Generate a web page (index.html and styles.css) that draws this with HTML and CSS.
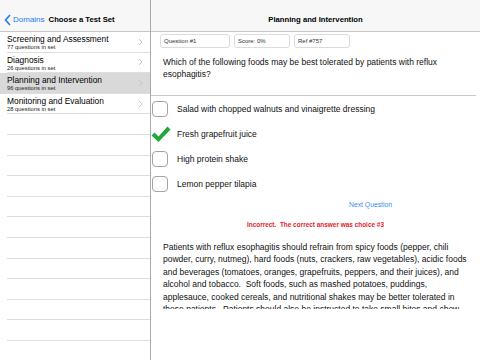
FILE: index.html
```html
<!DOCTYPE html>
<html>
<head>
<meta charset="utf-8">
<link rel="stylesheet" href="styles.css">
</head>
<body>
<div class="app">
  <aside class="sidebar">
    <header class="nav nav-left">
      <span class="back">
        <svg class="back-icon" width="7" height="12" viewBox="0 0 7 12"><polyline points="6,1 1.5,6 6,11" fill="none" stroke="#1a7cf6" stroke-width="1.6"/></svg>
        <span class="back-label">Domains</span>
      </span>
      <span class="nav-title">Choose a Test Set</span>
    </header>
    <ul class="sets">
      <li class="set"><div class="set-inner"><div class="set-text"><div class="set-title">Screening and Assessment</div><div class="set-sub">77 questions in set</div></div><svg class="chev" width="5" height="8" viewBox="0 0 5 8"><polyline points="1,1 4,4 1,7" fill="none" stroke="#c7c7cc" stroke-width="1"/></svg></div></li>
      <li class="set"><div class="set-inner"><div class="set-text"><div class="set-title">Diagnosis</div><div class="set-sub">26 questions in set</div></div><svg class="chev" width="5" height="8" viewBox="0 0 5 8"><polyline points="1,1 4,4 1,7" fill="none" stroke="#c7c7cc" stroke-width="1"/></svg></div></li>
      <li class="set selected"><div class="set-inner"><div class="set-text"><div class="set-title">Planning and Intervention</div><div class="set-sub">96 questions in set</div></div><svg class="chev" width="5" height="8" viewBox="0 0 5 8"><polyline points="1,1 4,4 1,7" fill="none" stroke="#c7c7cc" stroke-width="1"/></svg></div></li>
      <li class="set"><div class="set-inner"><div class="set-text"><div class="set-title">Monitoring and Evaluation</div><div class="set-sub">28 questions in set</div></div><svg class="chev" width="5" height="8" viewBox="0 0 5 8"><polyline points="1,1 4,4 1,7" fill="none" stroke="#c7c7cc" stroke-width="1"/></svg></div></li>
      <li class="set empty"><div class="set-inner"></div></li>
      <li class="set empty"><div class="set-inner"></div></li>
      <li class="set empty"><div class="set-inner"></div></li>
      <li class="set empty"><div class="set-inner"></div></li>
      <li class="set empty"><div class="set-inner"></div></li>
      <li class="set empty"><div class="set-inner"></div></li>
      <li class="set empty"><div class="set-inner"></div></li>
      <li class="set empty"><div class="set-inner"></div></li>
      <li class="set empty"><div class="set-inner"></div></li>
      <li class="set empty"><div class="set-inner"></div></li>
      <li class="set empty"><div class="set-inner"></div></li>
      <li class="set empty"><div class="set-inner"></div></li>
    </ul>
  </aside>
  <main class="detail">
    <header class="nav nav-right"><span class="nav-title">Planning and Intervention</span></header>
    <div class="meta">
      <div class="field f-question">Question #1</div>
      <div class="field f-score">Score: 0%</div>
      <div class="field f-ref">Ref #757</div>
    </div>
    <p class="question">Which of the following foods may be best tolerated by patients with reflux esophagitis?</p>
    <div class="divider"></div>
    <ul class="choices">
      <li class="choice"><span class="box"></span><span class="choice-text">Salad with chopped walnuts and vinaigrette dressing</span></li>
      <li class="choice"><svg class="check" width="20" height="17" viewBox="0 0 20 17"><path d="M0.5 9.5 L3.5 6.5 L7.5 10.5 L16.5 0.5 L19.5 3.5 L7.5 16 Z" fill="#1fa83a"/></svg><span class="choice-text">Fresh grapefruit juice</span></li>
      <li class="choice"><span class="box"></span><span class="choice-text">High protein shake</span></li>
      <li class="choice"><span class="box"></span><span class="choice-text">Lemon pepper tilapia</span></li>
    </ul>
    <div class="next">Next Question</div>
    <div class="feedback">Incorrect.  The correct answer was choice #3</div>
    <div class="explanation">Patients with reflux esophagitis should refrain from spicy foods (pepper, chili powder, curry, nutmeg), hard foods (nuts, crackers, raw vegetables), acidic foods and beverages (tomatoes, oranges, grapefruits, peppers, and their juices), and alcohol and tobacco.&nbsp; Soft foods, such as mashed potatoes, puddings, applesauce, cooked cereals, and nutritional shakes may be better tolerated in these patients.&nbsp; Patients should also be instructed to take small bites and chew food thoroughly.</div>
  </main>
</div>
</body>
</html>
```
FILE: styles.css
```css
* { box-sizing: border-box; }
html, body { margin: 0; padding: 0; }
body {
  width: 480px;
  height: 360px;
  overflow: hidden;
  background: #fff;
  font-family: "Liberation Sans", Arial, sans-serif;
  color: #111;
}
.app {
  display: flex;
  width: 480px;
  height: 360px;
}
.sidebar {
  width: 151px;
  flex: none;
  border-right: 1px solid #a9a9a9;
  overflow: hidden;
}
.nav {
  height: 32px;
  background: #f7f7f7;
  border-bottom: 1px solid #c8c8c8;
  display: flex;
  align-items: center;
  padding-top: 9px;
}
.nav-left {
  padding-left: 4px;
}
.back {
  display: flex;
  align-items: center;
}
.back-icon { margin-right: 2px; }
.back-label {
  color: #1a7cf6;
  font-size: 8px;
  line-height: 10px;
}
.nav-title {
  font-weight: bold;
  font-size: 7.7px;
  line-height: 10px;
  color: #000;
}
.nav-left .nav-title { margin-left: 4px; }
.nav-right { justify-content: center; }

.sets {
  list-style: none;
  margin: 0;
  padding: 0;
}
.set {
  height: 20.6px;
  padding-left: 7px;
}
.set.selected { background: #d9d9d9; }
.set-inner {
  height: 100%;
  border-bottom: 1px solid #dedede;
  display: flex;
  align-items: center;
  justify-content: space-between;
  padding-right: 7px;
}
.set-text { padding-top: 1px; }
.set-title {
  font-size: 8.4px;
  line-height: 10px;
  color: #000;
}
.set-sub {
  font-size: 5.8px;
  line-height: 6px;
  color: #222;
}
.chev { flex: none; }

.detail {
  flex: 1;
  min-width: 0;
  overflow: hidden;
}
.meta {
  display: flex;
  gap: 4px;
  padding-left: 9px;
  margin-top: 2px;
}
.field {
  height: 14px;
  border: 1px solid #dcdcdc;
  border-radius: 3px;
  font-size: 6px;
  line-height: 12px;
  padding-left: 3px;
  color: #333;
}
.f-question { width: 70px; }
.f-score { width: 56px; }
.f-ref { width: 56px; }
.question {
  margin: 8px 0 0;
  padding-left: 12px;
  padding-right: 10px;
  font-size: 8.5px;
  line-height: 12px;
  height: 39px;
  color: #111;
}
.divider {
  height: 1px;
  background: #c8c8c8;
  margin-right: 4px;
}
.choices {
  list-style: none;
  margin: 0;
  padding: 0;
}
.choice {
  height: 25px;
  display: flex;
  align-items: center;
  padding-left: 1px;
  padding-top: 1px;
}
.box {
  width: 16px;
  height: 16px;
  border: 1.3px solid #a4a4a4;
  border-radius: 4px;
  flex: none;
}
.check { flex: none; margin-left: -1px; margin-right: -3px; }
.choice-text {
  margin-left: 9px;
  font-size: 8.5px;
  color: #111;
}
.next {
  margin-top: 4px;
  padding-left: 198px;
  font-size: 6.8px;
  line-height: 10px;
  color: #3b8ff0;
}
.feedback {
  margin-top: 10px;
  text-align: center;
  white-space: pre;
  font-weight: bold;
  font-size: 6.45px;
  line-height: 9px;
  color: #e4212b;
}
.explanation {
  margin-top: 12px;
  padding-left: 12px;
  width: 320px;
  height: 68px;
  overflow: hidden;
  font-size: 8.5px;
  line-height: 12.4px;
  color: #111;
}
```
